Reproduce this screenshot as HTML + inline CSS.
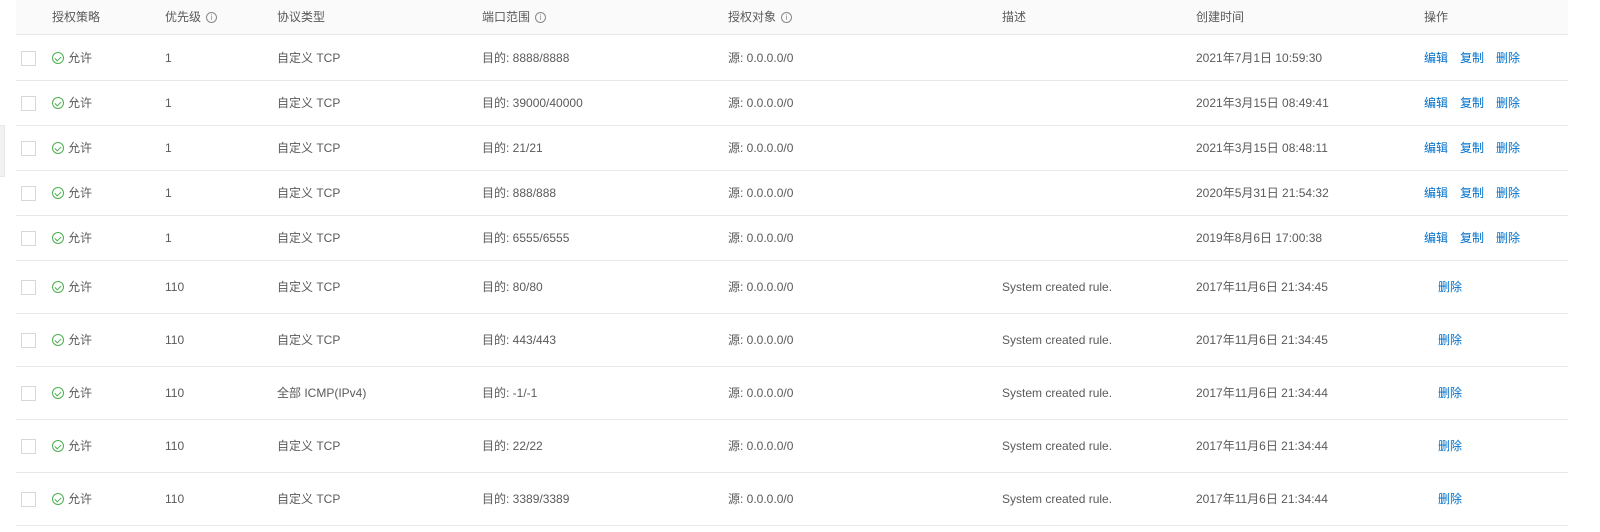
<!DOCTYPE html>
<html><head><meta charset="utf-8"><style>
*{margin:0;padding:0;box-sizing:border-box}
body{width:1600px;height:532px;background:#fff;font-family:"Liberation Sans","Noto Sans CJK SC",sans-serif;font-size:12px;color:#5a5a5a;position:relative;overflow:hidden}
.hdr{position:absolute;left:16px;top:0;width:1552px;height:35px;background:#fafafa;border-bottom:1px solid #e8e8e8}
.row{position:absolute;left:16px;width:1552px;border-bottom:1px solid #e8e8e8}
.c{position:absolute;top:0;height:100%;display:flex;align-items:center;white-space:nowrap;line-height:18px}
.c>span.t{display:inline-block;height:18px;line-height:18px}
.cb{width:15px;height:15px;border:1px solid #d8d8d8;background:#fff}
.ok{display:inline-block;width:12px;height:12px;border:1px solid #4caf50;border-radius:50%;margin-right:4px;position:relative}
.ok:after{content:"";position:absolute;left:3px;top:2px;width:3px;height:5px;border:solid #4caf50;border-width:0 1px 1px 0;transform:rotate(45deg)}
.a{color:#0070cc;margin-right:12px}
.i{display:inline-block;width:11px;height:11px;border:1px solid #888;border-radius:50%;font-size:8px;line-height:9px;text-align:center;margin-left:5px;color:#888}
.side{position:absolute;left:0;top:125px;width:5px;height:52px;background:#f2f2f2;border:1px solid #e6e6e6;border-left:none}
</style></head><body>
<div class="side"></div>
<div class="hdr">
<div class="c" style="left:36px">授权策略</div>
<div class="c" style="left:149px">优先级<span class="i">i</span></div>
<div class="c" style="left:261px">协议类型</div>
<div class="c" style="left:466px">端口范围<span class="i">i</span></div>
<div class="c" style="left:712px">授权对象<span class="i">i</span></div>
<div class="c" style="left:986px">描述</div>
<div class="c" style="left:1180px">创建时间</div>
<div class="c" style="left:1408px">操作</div>
</div>
<div id="rows"></div>
<script>
var d=[["1","自定义 TCP","8888/8888","","2021年7月1日 10:59:30"],
["1","自定义 TCP","39000/40000","","2021年3月15日 08:49:41"],
["1","自定义 TCP","21/21","","2021年3月15日 08:48:11"],
["1","自定义 TCP","888/888","","2020年5月31日 21:54:32"],
["1","自定义 TCP","6555/6555","","2019年8月6日 17:00:38"],
["110","自定义 TCP","80/80","System created rule.","2017年11月6日 21:34:45"],
["110","自定义 TCP","443/443","System created rule.","2017年11月6日 21:34:45"],
["110","全部 ICMP(IPv4)","-1/-1","System created rule.","2017年11月6日 21:34:44"],
["110","自定义 TCP","22/22","System created rule.","2017年11月6日 21:34:44"],
["110","自定义 TCP","3389/3389","System created rule.","2017年11月6日 21:34:44"]];
function t(s){return '<span class="t">'+s+'</span>';}
var h="",y=36;
d.forEach(function(r,i){var ht=i<5?45:53;
h+='<div class="row" style="top:'+y+'px;height:'+ht+'px">'+
'<div class="c" style="left:5px"><span class="cb"></span></div>'+
'<div class="c" style="left:36px"><span class="ok"></span>'+t('允许')+'</div>'+
'<div class="c" style="left:149px">'+t(r[0])+'</div>'+
'<div class="c" style="left:261px">'+t(r[1])+'</div>'+
'<div class="c" style="left:466px">'+t('目的: '+r[2])+'</div>'+
'<div class="c" style="left:712px">'+t('源: 0.0.0.0/0')+'</div>'+
'<div class="c" style="left:986px">'+t(r[3])+'</div>'+
'<div class="c" style="left:1180px">'+t(r[4])+'</div>'+
(i<5?'<div class="c" style="left:1408px"><span class="a">编辑</span><span class="a">复制</span><span class="a">删除</span></div>':'<div class="c" style="left:1422px"><span class="a">删除</span></div>')+
'</div>';y+=ht;});
document.getElementById("rows").innerHTML=h;
</script>
</body></html>
